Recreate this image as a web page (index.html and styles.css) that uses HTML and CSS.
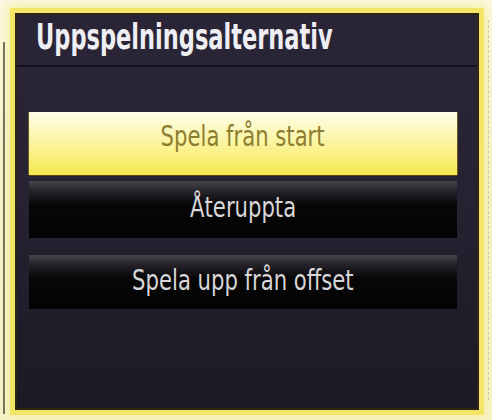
FILE: index.html
```html
<!DOCTYPE html>
<html lang="sv">
<head>
<meta charset="utf-8">
<title>Uppspelningsalternativ</title>
<link rel="stylesheet" href="styles.css">
</head>
<body>
<div class="screen">
  <div class="edge-left"></div>
  <div class="panel">
    <div class="header">
      <h1 class="title"><span class="title-text">Uppspelningsalternativ</span></h1>
    </div>
    <ul class="menu">
      <li class="item item-selected"><span class="label">Spela från start</span></li>
      <li class="item item-second"><span class="label">Återuppta</span></li>
      <li class="item item-third"><span class="label">Spela upp från offset</span></li>
    </ul>
  </div>
  <div class="edge-right"></div>
</div>
</body>
</html>
```

FILE: styles.css
```css
html, body {
  margin: 0;
  padding: 0;
}
body {
  width: 492px;
  height: 420px;
  overflow: hidden;
  background: linear-gradient(to bottom, #fbf9e4 0%, #f5f1cc 40%, #f6f2c8 100%);
  font-family: "DejaVu Sans Condensed", "DejaVu Sans", sans-serif;
}
.screen {
  display: flex;
  align-items: flex-start;
  height: 420px;
}
.edge-left {
  width: 2px;
  height: 372px;
  margin: 42px 0 0 3px;
  background: #4a4a40;
}
.panel {
  box-sizing: border-box;
  width: 464px;
  height: 397px;
  margin: 13px 0 0 10px;
  border: 2px solid #2e2410;
  background: linear-gradient(to bottom, #2b2637 0%, #272333 40%, #1c1a25 100%);
  box-shadow: 0 0 0 5px #f3e565, 0 0 9px 8px #f6eea6;
  display: flex;
  flex-direction: column;
}
.header {
  height: 50px;
  border-bottom: 2px solid #141118;
  background: #2a2536;
  display: flex;
  align-items: center;
  padding-left: 19px;
}
.title {
  margin: 0;
  font-size: 36px;
  font-weight: bold;
  color: #efeef2;
  line-height: 1;
  padding-bottom: 6px;
  white-space: nowrap;
}
.title-text {
  display: inline-block;
  transform: scaleX(0.695);
  transform-origin: left center;
}
.menu {
  list-style: none;
  margin: 0;
  padding: 45px 20px 0 12px;
  display: flex;
  flex-direction: column;
}
.item {
  display: flex;
  align-items: center;
  justify-content: center;
  font-size: 28px;
  color: #d7d6d8;
  white-space: nowrap;
}
.label {
  display: inline-block;
  transform: scaleX(0.84);
  transform-origin: center center;
}
.item-selected {
  height: 63px;
  box-sizing: border-box;
  padding-bottom: 14px;
  color: #8e7d2e;
  background: linear-gradient(to bottom, #fffdea 0%, #fbf6ad 40%, #f6e951 100%);
  box-shadow: 0 1px 0 #5a4716, 1px 0 0 #6b5a22, -1px 0 0 #6b5a22;
}
.item-second,
.item-third {
  box-sizing: border-box;
  padding-bottom: 4px;
  background: linear-gradient(to bottom, #48444d 0%, #252229 18%, #080708 42%, #030303 100%);
}
.item-second {
  height: 57px;
  margin-top: 6px;
}
.item-third {
  height: 54px;
  margin-top: 17px;
}
.edge-right {
  width: 0;
  height: 380px;
  margin: 20px 0 0 9px;
  border-left: 1px dashed #cfcba6;
}
```
